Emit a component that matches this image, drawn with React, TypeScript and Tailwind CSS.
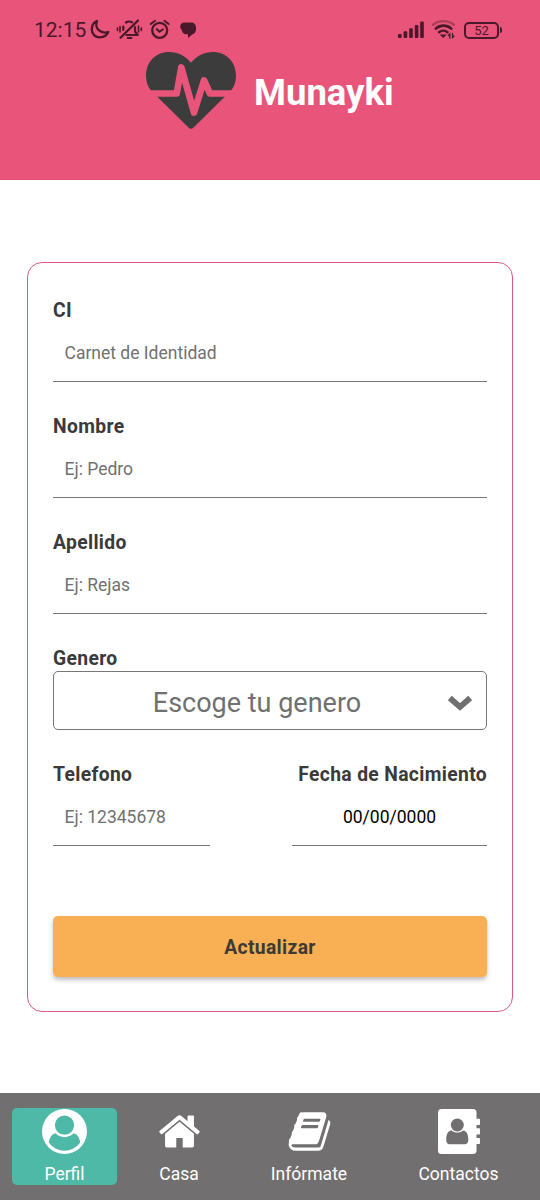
import type { ReactNode } from 'react';

function StatusBar() {
  return (
    <div className="flex h-[60px] items-center justify-between pl-[34px] pr-[38px] text-[#49182a]">
      <div className="flex items-center">
        <span className="w-[54px] whitespace-nowrap pt-px text-[21px] leading-none">12:15</span>
        <svg width="120" height="30" viewBox="0 0 120 30" fill="none" stroke="currentColor" strokeWidth="2" strokeLinecap="round" strokeLinejoin="round">
          <path d="M9 6C5.500 7.500 3.800 11 3.800 14.500C3.800 19 7.300 22.300 11.800 22.300C15.500 22.300 18.800 20.300 20.300 17C13 19.200 6 13.500 9 6Z" strokeWidth="2.300" />
          <g>
            <path d="M38 7.500C39 6.800 40 6.500 41 6.500C42 6.500 43 6.800 44 7.300M35.300 15V11.500M47 12V16.500L49.800 20H38.500" strokeWidth="2.200" />
            <path d="M32.500 22.800L50 5.500" strokeWidth="2.300" />
            <path d="M39.800 23H43.300" strokeWidth="2.200" />
            <path d="M32 11.500V17M29.500 13V15.500M50.500 11V17M53.300 13V15.500" strokeWidth="1.600" />
          </g>
          <g>
            <circle cx="71.700" cy="15.300" r="7.500" strokeWidth="2.300" />
            <path d="M68.800 14.300L71.500 16.800L75 14.300" strokeWidth="2" />
            <path d="M62.700 9L67 5.800M80.700 9L76.400 5.800" />
          </g>
          <path d="M96.500 7.500H103C106 7.500 108 9.500 108 12.500V14C108 17 106.500 18.800 104.500 19.200L100 23V19.300H98.500C95.500 19.300 94 17.500 93.800 15C91.300 13 91.500 7.800 96.500 7.500Z" fill="currentColor" stroke="none" />
        </svg>
      </div>
      <div className="flex items-center">
        <svg width="60" height="24" viewBox="0 0 60 24" fill="none" stroke="currentColor" strokeLinecap="round">
          <g fill="currentColor" stroke="none">
            <rect x="0" y="16" width="3.600" height="4" rx="1" />
            <rect x="5.600" y="13.300" width="3.600" height="6.700" rx="1" />
            <rect x="11.200" y="10.300" width="3.600" height="9.700" rx="1" />
            <rect x="16.800" y="7" width="3.600" height="13" rx="1" />
            <rect x="22.200" y="3.500" width="3.600" height="16.500" rx="1" />
          </g>
          <path d="M35 6.800C40.500 1.800 50.500 1.800 56 6.800" strokeWidth="2.300" opacity=".4" />
          <path d="M37.800 10.600C42.300 6.600 48.800 6.600 53.300 10.600" strokeWidth="2.600" />
          <path d="M41 14.300C43.500 12.200 47 12.200 49.500 14.300" strokeWidth="2.500" />
          <path d="M43.500 17.300L45.200 19L47 17.300Z" fill="currentColor" strokeWidth="1.500" />
          <path d="M51.800 20V16L50.500 17.500M54.500 15.500V19.500L56 18" strokeWidth="1.300" />
        </svg>
        <div className="ml-[6px] flex h-[17px] w-[35px] items-center justify-center rounded-[5px] border-2 border-[#49182a] text-[13px] leading-none">52</div>
        <div className="ml-[1px] h-[6px] w-[2px] rounded-r-sm bg-[#49182a]" />
      </div>
    </div>
  );
}

function HeartLogo() {
  return (
    <svg width="90" height="78" viewBox="0 0 90 78">
      <path d="M45 10.700C39 3.500 32 0 23 0C9.500 0 0 10 0 24C0 30 2 34.500 4.500 38L10 43.500L42.500 75.500Q45 78 47.500 75.500L80 43.500L85.500 38C88 34.500 90 30 90 24C90 10 80.500 0 67 0C58 0 51 3.500 45 10.700Z" fill="#3c3c3c" />
      <path d="M0 41.500H30.700L35.300 15.500L48 60.500L58 28.500L64 41.500H90" fill="none" stroke="#e9557a" strokeWidth="6.700" strokeLinejoin="round" />
    </svg>
  );
}

const labelClass = 'block h-6 whitespace-nowrap pt-px text-[19.3px] font-bold leading-6 tracking-[0.35px] text-[#3a3a3a]';
const inputClass = 'block h-[60px] w-full rounded-none border-b-[1.5px] border-[#777777] bg-transparent pt-0.5 text-[17.5px] outline-none';

function Field({ label, placeholder }: { label: string; placeholder: string }) {
  return (
    <label className="mb-8 block">
      <span className={labelClass}>{label}</span>
      <input className={`${inputClass} px-[11.5px] placeholder:text-[#717171]`} placeholder={placeholder} />
    </label>
  );
}

function NavItem({ label, className, active, children }: { label: string; className: string; active?: boolean; children: ReactNode }) {
  return (
    <a className={`flex h-[77px] flex-col items-center rounded-[5px] ${className} ${active ? 'bg-[#4fb9a8]' : ''}`}>
      <span className="flex h-[46px] items-center pt-px">{children}</span>
      <span className="mt-2 text-[17.5px] leading-6">{label}</span>
    </a>
  );
}

export default function App() {
  return (
    <div className="flex h-[1200px] w-[540px] flex-col bg-white font-['Roboto',sans-serif]">
      <header className="h-[180px] shrink-0 bg-[#e9557a]">
        <StatusBar />
        <div className="-mt-2 flex items-start pl-[146px]">
          <HeartLogo />
          <h1 className="ml-[18px] mt-[19px] text-[36.5px] font-bold leading-[44px] text-white">Munayki</h1>
        </div>
      </header>

      <main className="grow px-[27px] pt-[82px]">
        <form className="h-[750px] rounded-[15px] border-[1.5px] border-[#db5a80] px-[25px] pt-[35px]">
          <Field label="CI" placeholder="Carnet de Identidad" />
          <Field label="Nombre" placeholder="Ej: Pedro" />
          <Field label="Apellido" placeholder="Ej: Rejas" />
          <span className={labelClass}>Genero</span>
          <button type="button" className="mt-px flex h-[59px] w-full items-center rounded-[5px] border border-[#777777] pr-[13px] text-[#707070]">
            <span className="grow pl-[13px] pt-1 text-center text-[27px] leading-8">Escoge tu genero</span>
            <svg width="26" height="18" viewBox="0 0 26 18" className="mt-1">
              <path d="M2.800 4L13 13L23.200 4" fill="none" stroke="currentColor" strokeWidth="5.800" />
            </svg>
          </button>
          <div className="mt-8 flex justify-between">
            <label className="w-[157px]">
              <span className={labelClass}>Telefono</span>
              <input className={`${inputClass} px-[11.5px] placeholder:text-[#717171]`} placeholder="Ej: 12345678" />
            </label>
            <label className="w-[195px]">
              <span className={`${labelClass} text-right`}>Fecha de Nacimiento</span>
              <input className={`${inputClass} text-center text-black`} defaultValue="00/00/0000" />
            </label>
          </div>
          <button type="button" className="mt-[70px] h-[61px] w-full rounded-[5px] bg-[#f9b055] pt-[3px] text-[19.3px] font-bold tracking-[0.35px] text-[#3c3a35] shadow-[0_3px_4px_rgba(0,0,0,0.25)]">
            Actualizar
          </button>
        </form>
      </main>

      <nav className="flex h-[107px] shrink-0 bg-[#716f70] pl-3 pt-[15px] text-white">
        <NavItem label="Perfil" active className="w-[105px]">
          <svg width="45" height="45" viewBox="0 0 1792 1792" fill="currentColor">
            <path d="M1523 1339q-22-155-87.500-257.500t-184.500-118.500q-67 74-159.500 115.500t-195.500 41.500-195.500-41.500-159.500-115.500q-119 16-184.500 118.500t-87.500 257.500q106 150 271 237.500t356 87.500 356-87.500 271-237.500zm-243-699q0-159-112.500-271.500t-271.500-112.500-271.500 112.500-112.500 271.500 112.500 271.500 271.500 112.500 271.500-112.500 112.500-271.500zm512 256q0 182-71 347.500t-190.500 286-285.500 191.500-349 71q-182 0-348-71t-286-191-191-286-71-348 71-348 191-286 286-191 348-71 348 71 286 191 191 286 71 348z" />
          </svg>
        </NavItem>
        <NavItem label="Casa" className="w-[124px]">
          <svg width="45" height="45" viewBox="0 0 1792 1792" fill="currentColor">
            <path d="M1472 992v480q0 26-19 45t-45 19h-384v-384h-256v384h-384q-26 0-45-19t-19-45v-480q0-1 .5-3t.5-3l575-474 575 474q1 2 1 6zm223-69l-62 74q-8 9-21 11h-3q-13 0-21-7l-692-577-692 577q-12 8-24 7-13-2-21-11l-62-74q-8-10-7-23.500t11-21.500l719-599q32-26 76-26t76 26l244 204v-195q0-14 9-23t23-9h192q14 0 23 9t9 23v408l219 182q10 8 11 21.500t-7 23.500z" />
          </svg>
        </NavItem>
        <NavItem label="Infórmate" className="w-[136px]">
          <svg width="45" height="45" viewBox="0 0 1792 1792" fill="currentColor">
            <path d="M1703 478q40 57 18 129l-275 906q-19 64-76.500 107.500t-122.500 43.500h-923q-77 0-148.500-53.500t-99.500-131.500q-24-67-2-127 0-4 3-27t4-37q1-8-3-21.500t-3-19.500q2-11 8-21t16.500-23.500 16.500-23.500q23-38 45-91.500t30-91.500q3-10 .5-30t-.5-28q3-11 17-28t17-23q21-36 42-92t25-90q1-9-2.500-32t.5-28q4-13 22-30.500t22-22.500q19-26 42.500-84.500t27.500-96.500q1-8-3-25.500t-2-26.500q2-8 9-18t18-23 17-21q8-12 16.500-30.500t15-35 16-36 19.500-32 26.500-23.500 36-11.500 47.500 5.500l-1 3q38-9 51-9h761q74 0 114 56t18 130l-274 906q-36 119-71.500 153.500t-128.500 34.500h-869q-27 0-38 15-11 16-1 43 24 70 144 70h923q29 0 56-15.500t35-41.500l300-987q7-22 5-57 38 15 59 43zm-1064 2q-4 13 2 22.500t20 9.500h608q13 0 25.500-9.500t16.500-22.500l21-64q4-13-2-22.500t-20-9.500h-608q-13 0-25.500 9.500t-16.500 22.500zm-83 256q-4 13 2 22.500t20 9.500h608q13 0 25.500-9.500t16.500-22.500l21-64q4-13-2-22.500t-20-9.500h-608q-13 0-25.500 9.500t-16.500 22.500z" />
          </svg>
        </NavItem>
        <NavItem label="Contactos" className="w-[163px]">
          <svg width="42" height="45" viewBox="0 0 42 45">
            <rect width="38.500" height="45" rx="3.500" fill="#fff" />
            <path d="M38 9.700H41.200Q42 9.700 42 10.500V15.200Q42 16 41.200 16H38ZM38 19.300H41.200Q42 19.300 42 20.100V24.800Q42 25.600 41.200 25.600H38ZM38 29H41.200Q42 29 42 29.800V34.300Q42 35.100 41.200 35.100H38Z" fill="#fff" />
            <circle cx="19.300" cy="16" r="6.500" fill="#716f70" />
            <path d="M13.500 21.500C16.500 24.300 22 24.300 25 21.500C29 22 30.300 25.500 30.300 31C30.300 33.500 29 35.200 27 35.200H11.500C9.500 35.200 8.200 33.500 8.200 31C8.200 25.500 9.500 22 13.500 21.500Z" fill="#716f70" />
          </svg>
        </NavItem>
      </nav>
    </div>
  );
}
